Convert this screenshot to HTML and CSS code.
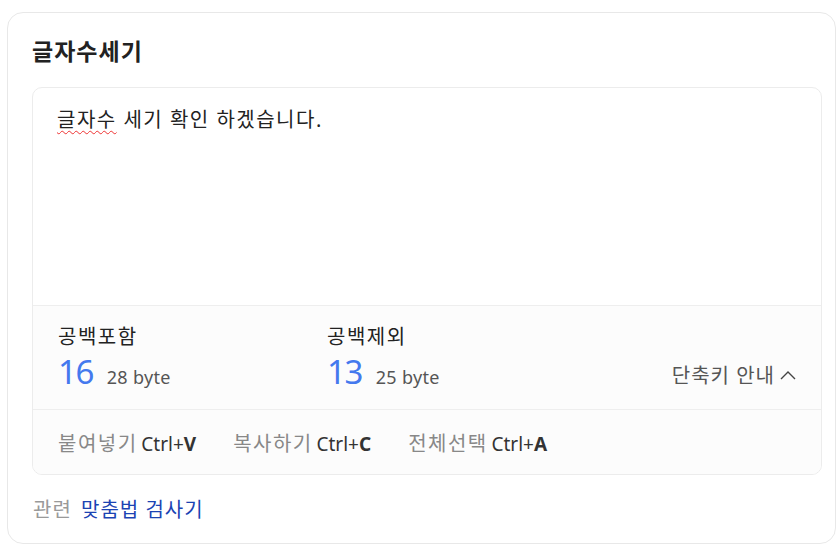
FILE: index.html
```html
<!DOCTYPE html>
<html lang="ko">
<head>
    <meta charset="UTF-8">
    <meta name="viewport" content="width=device-width, initial-scale=1.0">
    <title>글자수세기</title>
    <link rel="stylesheet" href="styles.css">
</head>
<body>
    <div class="page">
        <div class="card">
            <h1 class="title">글자수세기</h1>
            <div class="counter">
                <div class="editor"><span class="typo">글자수</span> 세기 확인 하겠습니다.</div>
                <div class="stats">
                    <div class="stat">
                        <div class="stat-label">공백포함</div>
                        <div class="stat-value"><span class="num">16</span><span class="byte">28 byte</span></div>
                    </div>
                    <div class="stat">
                        <div class="stat-label">공백제외</div>
                        <div class="stat-value"><span class="num">13</span><span class="byte">25 byte</span></div>
                    </div>
                    <div class="guide">단축키 안내
                        <svg width="18" height="16" viewBox="0 0 18 16"><polyline points="2,11 9,4 16,11" fill="none" stroke="#444" stroke-width="1.4"/></svg>
                    </div>
                </div>
                <div class="shortcuts">
                    <span class="key">붙여넣기 <em>Ctrl+<b>V</b></em></span>
                    <span class="key">복사하기 <em>Ctrl+<b>C</b></em></span>
                    <span class="key">전체선택 <em>Ctrl+<b>A</b></em></span>
                </div>
            </div>
            <div class="related">관련 <a href="#">맞춤법 검사기</a></div>
        </div>
    </div>
</body>
</html>
```

FILE: styles.css
```css
body {
    margin: 0;
    padding: 0;
    background-color: #fff;
    color: #222;
    font-family: "Noto Sans", "Noto Sans CJK KR", sans-serif;
}
.page {
    padding: 12px 0 0 7px;
}
.card {
    width: 829px;
    box-sizing: border-box;
    border: 1px solid #e8e8e8;
    border-radius: 16px;
    padding: 23px 13px 0 24px;
    height: 532px;
}
.title {
    margin: 0 0 21px;
    font-size: 23px;
    line-height: 30px;
    font-weight: 700;
    color: #222;
    letter-spacing: 1px;
}
.counter {
    border: 1px solid #ececec;
    border-radius: 10px;
    overflow: hidden;
}
.editor {
    height: 217px;
    box-sizing: border-box;
    padding: 20px 24px;
    font-size: 20px;
    line-height: 24px;
    letter-spacing: 1.5px;
    color: #222;
}
.typo {
    text-decoration: underline wavy #e33;
    text-decoration-thickness: 1px;
    text-underline-offset: 3px;
}
.stats {
    display: flex;
    align-items: flex-end;
    background-color: #fcfcfc;
    border-top: 1px solid #eee;
    padding: 19px 24px 18px 25px;
}
.stat {
    width: 269px;
}
.stat-label {
    font-size: 20px;
    line-height: 24px;
    letter-spacing: 1.5px;
    color: #222;
}
.stat-value {
    margin-top: 4px;
    height: 38px;
    display: flex;
    align-items: baseline;
}
.num {
    font-size: 33px;
    line-height: 38px;
    letter-spacing: -1.5px;
    color: #4479ee;
    margin-right: 14px;
}
.byte {
    font-size: 18px;
    line-height: 38px;
    letter-spacing: 0.3px;
    color: #555;
}
.guide {
    margin-left: auto;
    display: flex;
    align-items: center;
    gap: 4px;
    font-size: 20px;
    line-height: 24px;
    letter-spacing: 1px;
    color: #555;
    padding-bottom: 3px;
}
.shortcuts {
    display: flex;
    gap: 37px;
    background-color: #fcfcfc;
    border-top: 1px solid #eee;
    padding: 22px 25px 18px;
    line-height: 24px;
}
.key {
    font-size: 20px;
    letter-spacing: 1.5px;
    color: #888;
}
.key em {
    margin-left: -3px;
    font-style: normal;
    font-size: 19px;
    letter-spacing: 0;
    color: #333;
}
.key b {
    font-weight: 700;
}
.related {
    margin-top: 22px;
    padding-left: 1px;
    font-size: 20px;
    line-height: 26px;
    letter-spacing: 1px;
    color: #999;
}
.related a {
    margin-left: 3px;
    color: #1b43b3;
    text-decoration: none;
}
```
